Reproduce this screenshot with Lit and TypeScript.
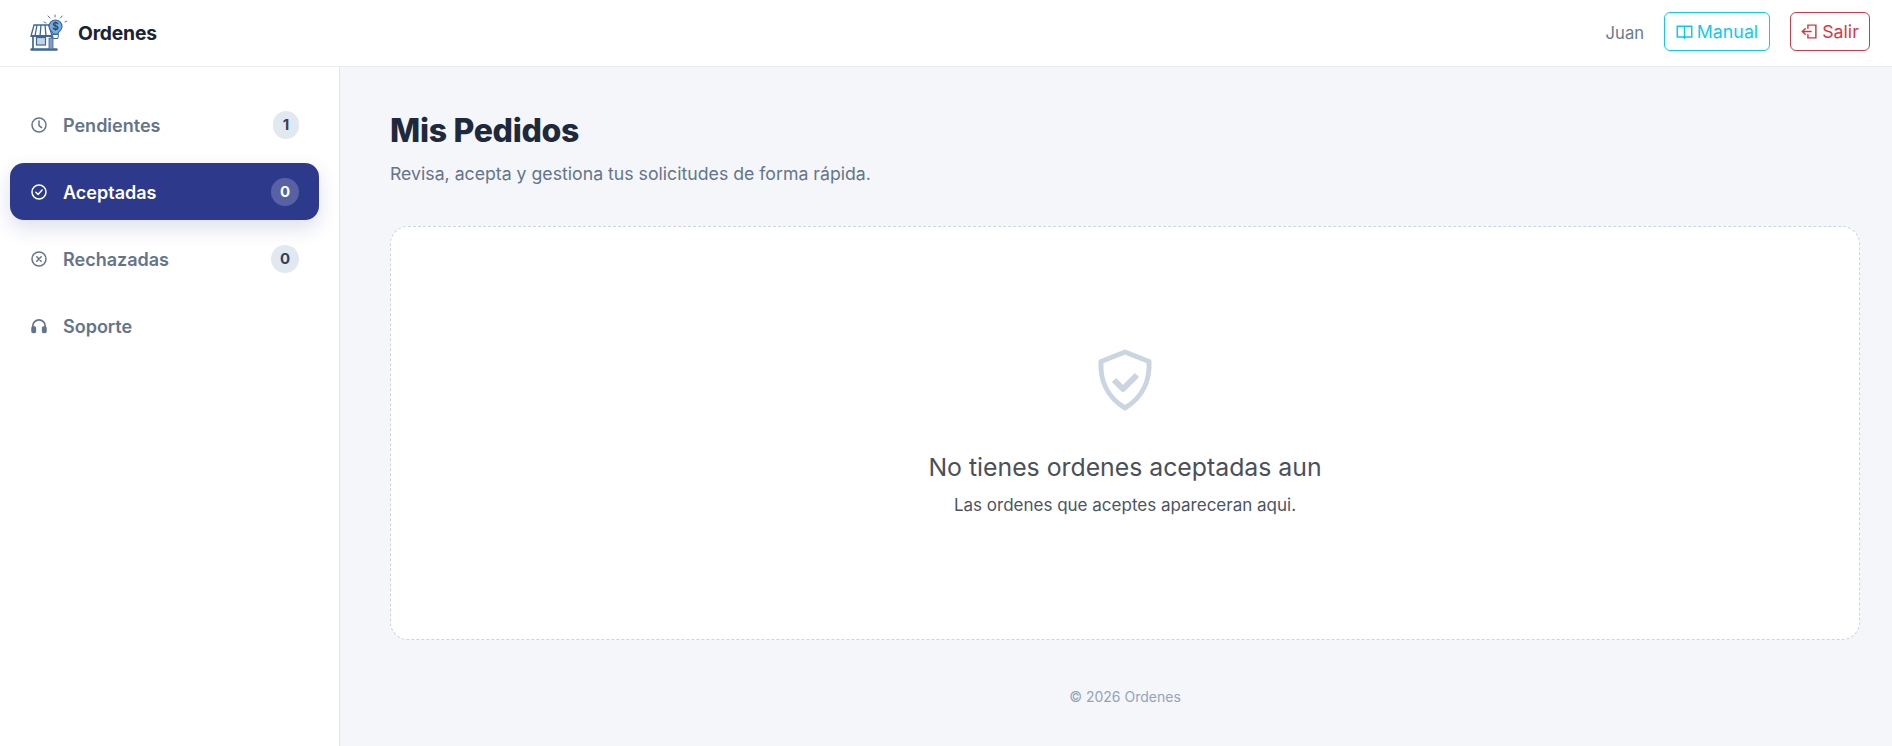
import { LitElement, html, css, svg } from "lit";
import { customElement } from "lit/decorators.js";

const ic = (body: unknown, cls = "") => html`<svg class="ic ${cls}" viewBox="0 0 16 16" fill="none" stroke="currentColor" stroke-width="1.5" stroke-linecap="round" stroke-linejoin="round">${body}</svg>`;

const icons = {
  clock: svg`<circle cx="8" cy="8" r="7"/><path d="M8 3.900V8.600l2.600 2"/>`,
  check: svg`<circle cx="8" cy="8" r="7"/><path d="M4.900 8.300l2.200 2.200 4-4.400"/>`,
  x: svg`<circle cx="8" cy="8" r="7"/><path d="M5.800 5.800l4.400 4.400M10.200 5.800l-4.400 4.400"/>`,
  phones: svg`<path d="M1.800 10V8a6.200 6.200 0 0 1 12.400 0v2" stroke-width="1.700"/><rect x="1" y="9" width="3.400" height="5.400" rx="1" fill="currentColor"/><rect x="11.600" y="9" width="3.400" height="5.400" rx="1" fill="currentColor"/>`,
  book: svg`<path d="M8 3H1.200v10.200H7L8 14.200l1-1h5.800V3zM8 3v11" stroke-width="1.400" stroke-linejoin="miter"/>`,
  exit: svg`<path d="M6.500 5V2h7.500v12H6.500v-3M1.200 8h8.300M4 5.400L1.200 8 4 10.600" stroke-width="1.400" stroke-linejoin="miter"/>`,
};

@customElement("app-root")
export class AppRoot extends LitElement {
  static styles = css`
    :host { display: block; height: 746px; font-family: Inter, "Noto Sans", sans-serif; background: #f4f6fa; color: #1e293b; overflow: hidden; }
    .top { height: 66px; background: #fff; border-bottom: 1px solid #e9ebef; display: flex; align-items: center; padding: 0 22px 0 30px; }
    .brand { display: flex; align-items: center; gap: 11px; font-weight: 700; font-size: 19.300px; color: #1a2234; letter-spacing: -.2px; }
    .logo { width: 37px; height: 37px; margin-top: -2px; }
    .right { margin-left: auto; display: flex; align-items: center; margin-bottom: 3px; }
    .user { font-size: 16.600px; color: #6b7a90; margin-right: 20px; margin-top: 3px; }
    .btn { height: 39px; box-sizing: border-box; border: 1px solid; border-radius: 6px; display: flex; align-items: center; gap: 4px; font-size: 17.800px; background: #fff; }
    .btn .ic { width: 17px; height: 17px; }
    .manual { width: 106px; color: #0dcaf0; border-color: #0dcaf0; justify-content: center; margin-right: 20px; }
    .salir { width: 80px; color: #dc3545; border-color: #dc3545; justify-content: center; }
    .body { display: flex; height: 679px; }
    aside { background: #fff; border-right: 1px solid #e3e5ea; padding: 29px 20px 0 10px; flex: none; width: 309px; display: flex; flex-direction: column; gap: 10px; }
    .item { height: 57px; box-sizing: border-box; padding: 1px 20px 0 21px; display: flex; align-items: center; border-radius: 14px; color: #64748b; font-weight: 600; font-size: 18px; }
    .item .ic { width: 16px; height: 16px; margin-right: 16px; margin-top: -1px; }
    .item.on { background: #2d3a8c; color: #fff; box-shadow: 0 8px 20px rgba(45,58,140,.16); }
    .badge { margin-left: auto; margin-top: -1px; height: 28px; min-width: 28px; padding: 0 9px; box-sizing: border-box; border-radius: 14px; background: #e2e8f0; color: #334155; display: flex; align-items: center; justify-content: center; font-size: 15px; font-weight: 700; }
    .badge.one { padding: 0 8px; min-width: 26px; }
    .on .badge { background: rgba(255,255,255,.2); color: #fff; }
    main { flex: 1; padding: 44px 32px 0 50px; display: flex; flex-direction: column; }
    h1 { margin: 0; font-size: 32px; line-height: 40px; font-weight: 800; color: #1e293b; letter-spacing: -.3px; }
    .sub { margin: 10px 0 0; font-size: 17.700px; line-height: 26px; color: #64748b; }
    .card { margin-top: 39px; height: 414px; box-sizing: border-box; background: #fff; border: 1px dashed #cbd5e1; border-radius: 18px; display: flex; flex-direction: column; align-items: center; padding-top: 122px; }
    .shield { width: 56px; height: 62px; color: #cbd5e1; }
    h2 { margin: 40px 0 0; font-size: 24.800px; line-height: 32px; font-weight: 400; color: #4b5058; }
    .msg { margin: 10px 0 0; font-size: 17px; line-height: 24px; color: #4b5563; }
    footer { margin-top: 47px; text-align: center; font-size: 14px; line-height: 20px; color: #94a3b8; }
  `;

  private item(icon: unknown, label: string, badge?: string, on = false) {
    return html`<div class="item ${on ? "on" : ""}">${ic(icon)}<span>${label}</span>${badge ? html`<span class="badge ${badge === "1" ? "one" : ""}">${badge}</span>` : ""}</div>`;
  }

  render() {
    return html`
      <div class="top">
        <div class="brand">
          <svg class="logo" viewBox="0 0 37 37" fill="none" stroke="#3f6797" stroke-width="1.300">
            <path d="M14 8l2 1M18 2l2 2M25 1v2M32 2l-1.500 2M37 7l-2 1" stroke-linecap="round" stroke-width=".9"/>
            <path d="M4 11h15l3 11H1z" fill="#fff"/><path d="M7 11l-2 11M11 11l-1 11M15 11l1 11"/>
            <path d="M1 22h21" stroke-width="2"/>
            <path d="M3 22v13M22 22v13" stroke-width="1.700"/>
            <rect x="6.500" y="23.500" width="9" height="7.500" fill="#c4d5ea" stroke-width="1.200"/>
            <path d="M1.500 35.500h25" stroke-width="2.400" stroke-linecap="round"/>
            <path d="M19 24h4v11h-4z" fill="#7f9fc6" stroke-width=".8"/>
            <path d="M23 20c0-2.500-4-3.500-4-7.500a6.500 6.500 0 0 1 13 0c0 4-4 5-4 7.500z" fill="#79aee2" stroke-width="1.200"/>
            <path d="M22.500 20.500h6l-.7 4h-4.600z" fill="#fff" stroke-width="1"/>
            <text x="25.500" y="16" text-anchor="middle" font-size="10" font-weight="700" fill="#26486e" stroke="none">$</text>
          </svg>
          <span>Ordenes</span>
        </div>
        <div class="right">
          <span class="user">Juan</span>
          <div class="btn manual">${ic(icons.book)}<span>Manual</span></div>
          <div class="btn salir">${ic(icons.exit)}<span>Salir</span></div>
        </div>
      </div>
      <div class="body">
        <aside>
          ${this.item(icons.clock, "Pendientes", "1")}
          ${this.item(icons.check, "Aceptadas", "0", true)}
          ${this.item(icons.x, "Rechazadas", "0")}
          ${this.item(icons.phones, "Soporte")}
        </aside>
        <main>
          <h1>Mis Pedidos</h1>
          <p class="sub">Revisa, acepta y gestiona tus solicitudes de forma rápida.</p>
          <div class="card">
            <svg class="shield" viewBox="0 0 56 62" fill="none" stroke="currentColor" stroke-width="5" stroke-linejoin="round">
              <path d="M28 3l24 9.500c1 17-5 35-24 46.500C9 47.500 3 29.500 4 12.500z"/>
              <path d="M17 31l9 9 14-14" stroke-width="6"/>
            </svg>
            <h2>No tienes ordenes aceptadas aun</h2>
            <p class="msg">Las ordenes que aceptes apareceran aqui.</p>
          </div>
          <footer>© 2026 Ordenes</footer>
        </main>
      </div>
    `;
  }
}
